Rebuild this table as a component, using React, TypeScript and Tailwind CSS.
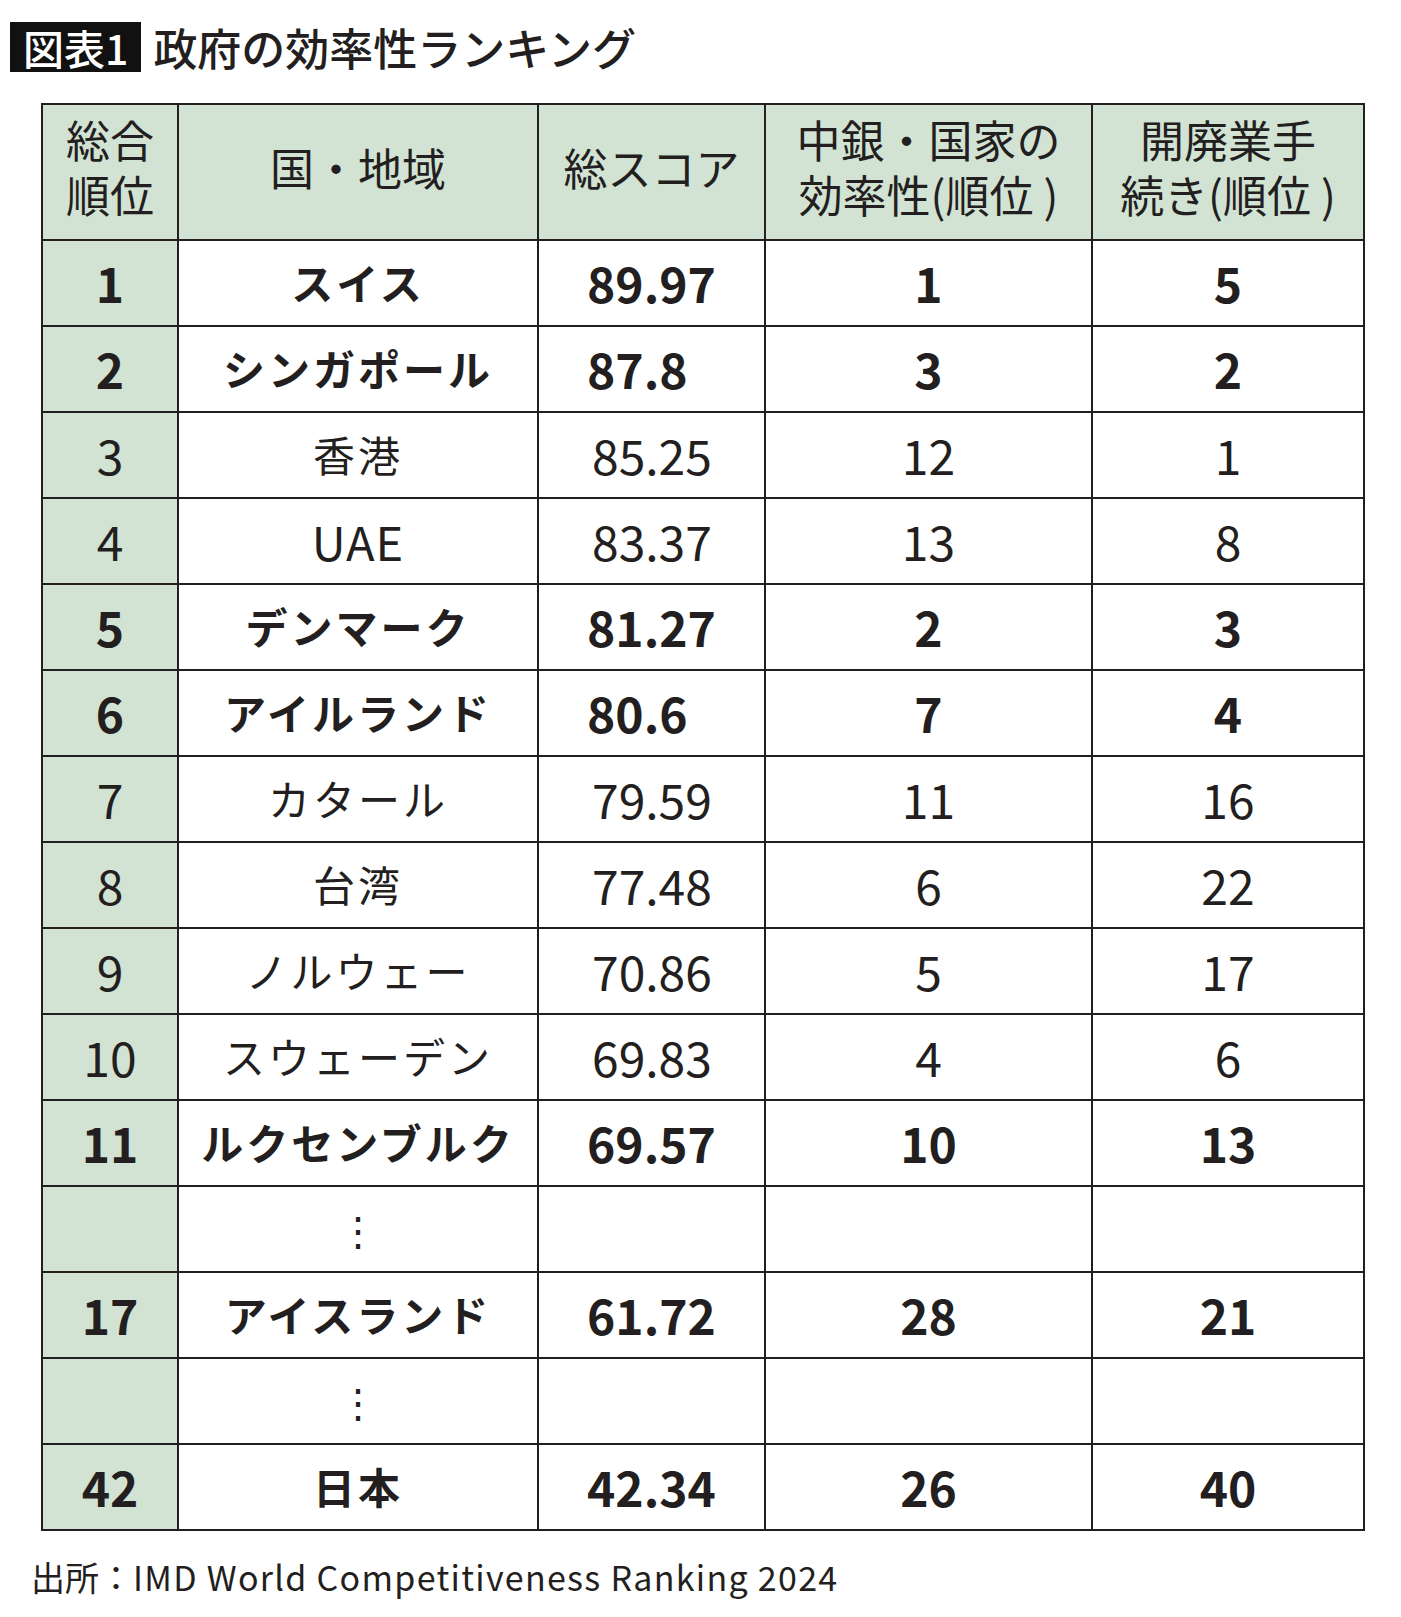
import React from "react";

type Row = {
  rank: string;
  name: string;
  score: string;
  cb: string;
  biz: string;
  bold?: boolean;
  dots?: boolean;
};

const rows: Row[] = [
  { rank: "1", name: "スイス", score: "89.97", cb: "1", biz: "5", bold: true },
  { rank: "2", name: "シンガポール", score: "87.8", cb: "3", biz: "2", bold: true },
  { rank: "3", name: "香港", score: "85.25", cb: "12", biz: "1" },
  { rank: "4", name: "UAE", score: "83.37", cb: "13", biz: "8" },
  { rank: "5", name: "デンマーク", score: "81.27", cb: "2", biz: "3", bold: true },
  { rank: "6", name: "アイルランド", score: "80.6", cb: "7", biz: "4", bold: true },
  { rank: "7", name: "カタール", score: "79.59", cb: "11", biz: "16" },
  { rank: "8", name: "台湾", score: "77.48", cb: "6", biz: "22" },
  { rank: "9", name: "ノルウェー", score: "70.86", cb: "5", biz: "17" },
  { rank: "10", name: "スウェーデン", score: "69.83", cb: "4", biz: "6" },
  { rank: "11", name: "ルクセンブルク", score: "69.57", cb: "10", biz: "13", bold: true },
  { rank: "", name: "", score: "", cb: "", biz: "", dots: true },
  { rank: "17", name: "アイスランド", score: "61.72", cb: "28", biz: "21", bold: true },
  { rank: "", name: "", score: "", cb: "", biz: "", dots: true },
  { rank: "42", name: "日本", score: "42.34", cb: "26", biz: "40", bold: true },
];

const cellBase = "border-r-2 border-b-2 border-[#231f20] flex items-center h-[86px] pb-[2px]";
const headBase =
  "border-r-2 border-b-2 border-[#231f20] bg-[#d2e3d4] flex items-center justify-center h-[136px] text-center text-[44px] leading-[55px] pb-[10px]";

export default function App() {
  return (
    <div className="w-[1401px] h-[1617px] bg-white text-[#231f20] font-['Noto_Sans_CJK_JP',sans-serif]">
      <div className="pt-[22px] pl-[10px] flex items-center">
        <div className="h-[50px] bg-[#111] text-white flex items-center px-[13px] text-[41px] font-medium leading-none">
          図表1
        </div>
        <div className="ml-[12px] text-[44px] font-medium leading-none">政府の効率性ランキング</div>
      </div>

      <div className="mt-[31px] ml-[41px] w-[1324px] border-l-2 border-t-2 border-[#231f20] grid grid-cols-[136px_360px_227px_327px_272px]">
        <div className={headBase}>
          総合
          <br />
          順位
        </div>
        <div className={headBase}>国・地域</div>
        <div className={headBase}>総スコア</div>
        <div className={headBase}>
          <div>
            中銀・国家の
            <br />
            効率性(順位<span className="ml-[10px]">)</span>
          </div>
        </div>
        <div className={headBase}>
          <div>
            開廃業手
            <br />
            続き(順位<span className="ml-[10px]">)</span>
          </div>
        </div>

        {rows.map((r, i) => {
          const w = r.bold ? "font-bold" : "font-normal";
          return (
            <React.Fragment key={i}>
              <div className={`${cellBase} bg-[#d2e3d4] justify-center text-[48px] leading-none ${w}`}>{r.rank}</div>
              <div className={`${cellBase} justify-center leading-none ${w}`}>
                {r.dots ? (
                  <span className="text-[40px] leading-none">⋮</span>
                ) : r.name === "UAE" ? (
                  <span className="text-[47px] tracking-[1px]">{r.name}</span>
                ) : (
                  <span className="text-[42px] tracking-[3px]">{r.name}</span>
                )}
              </div>
              <div
                className={`${cellBase} justify-start ${r.bold ? "pl-[48px]" : "pl-[53px]"} text-[48px] leading-none ${w}`}
              >
                {r.score}
              </div>
              <div className={`${cellBase} justify-center text-[48px] leading-none ${w}`}>{r.cb}</div>
              <div className={`${cellBase} justify-center text-[48px] leading-none ${w}`}>{r.biz}</div>
            </React.Fragment>
          );
        })}
      </div>

      <div className="mt-[26px] ml-[31px] text-[34px] leading-[40px]">
        出所：<span className="tracking-[1.3px]">IMD World Competitiveness Ranking 2024</span>
      </div>
    </div>
  );
}
